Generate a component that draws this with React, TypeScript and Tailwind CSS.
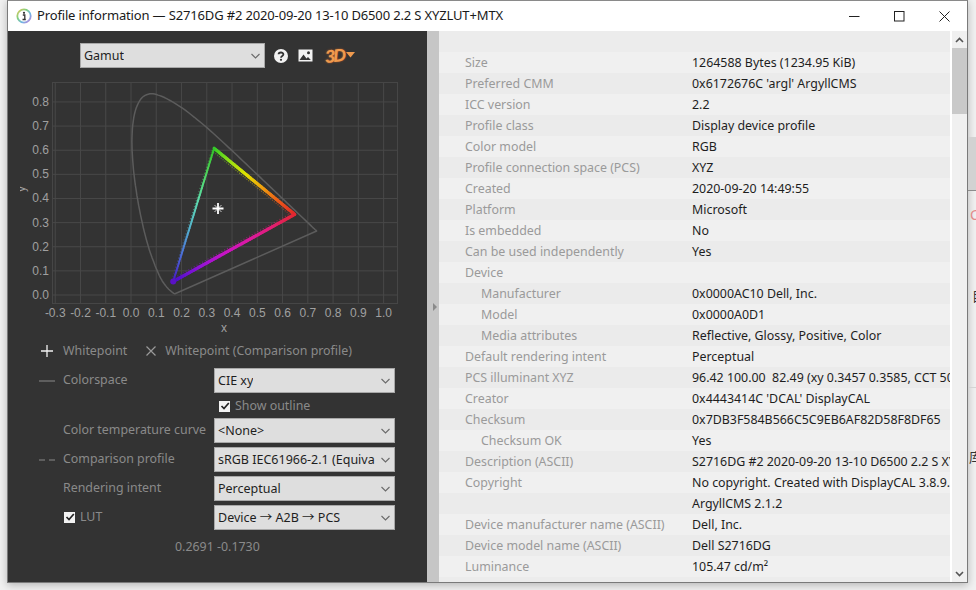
import React from "react";

const FONT = '"Noto Sans", "Noto Sans CJK SC", sans-serif';

const rawLocus: [number, number][] = [
  [0.1741, 0.005], [0.1689, 0.0069], [0.156, 0.0177], [0.144, 0.0297], [0.1241, 0.0578],
  [0.1096, 0.0868], [0.0913, 0.1327], [0.0687, 0.2007], [0.0454, 0.295], [0.0235, 0.4127],
  [0.0082, 0.5384], [0.0039, 0.6548], [0.0139, 0.7502], [0.0389, 0.812], [0.0743, 0.8338],
  [0.1142, 0.8262], [0.1547, 0.8059], [0.1929, 0.7816], [0.2296, 0.7543], [0.3016, 0.6923],
  [0.3731, 0.6245], [0.4441, 0.5547], [0.5125, 0.4866], [0.5752, 0.4242], [0.627, 0.3725],
  [0.6915, 0.3083], [0.719, 0.2809], [0.7347, 0.2653],
];

// Catmull-Rom resampling, so the spectral locus is a smooth curve
const locus: [number, number][] = [];
rawLocus.forEach((p1, i) => {
  if (i === rawLocus.length - 1) {
    locus.push(p1);
    return;
  }
  const p0 = rawLocus[Math.max(i - 1, 0)];
  const p2 = rawLocus[i + 1];
  const p3 = rawLocus[Math.min(i + 2, rawLocus.length - 1)];
  for (let s = 0; s < 6; s++) {
    const t = s / 6;
    const f = (a: number, b: number, c: number, d: number) =>
      0.5 * (2 * b + (c - a) * t + (2 * a - 5 * b + 4 * c - d) * t * t + (3 * b - a - 3 * c + d) * t * t * t);
    locus.push([f(p0[0], p1[0], p2[0], p3[0]), f(p0[1], p1[1], p2[1], p3[1])]);
  }
});

// The svg starts at page (20, 80)
const px = (x: number) => 131 - 20 + x * 252.6;
const py = (y: number) => 295 - 80 - y * 241.3;

type Stop = [number, number, number];
const mix = (stops: Stop[], t: number) => {
  const f = Math.min(t * (stops.length - 1), stops.length - 1.0001);
  const i = Math.floor(f);
  const k = f - i;
  const c = stops[i].map((v, n) => Math.round(v + (stops[i + 1][n] - v) * k));
  return `rgb(${c[0]},${c[1]},${c[2]})`;
};

const R: [number, number] = [0.648, 0.334];
const G: [number, number] = [0.329, 0.608];
const B: [number, number] = [0.167, 0.056];

const edges: { a: [number, number]; b: [number, number]; w: number; stops: Stop[]; off: [number, number] }[] = [
  {
    a: G, b: R, w: 3.2, off: [-2, 2.4],
    stops: [[50, 205, 40], [150, 225, 20], [225, 225, 0], [240, 160, 15], [235, 90, 25], [225, 40, 40]],
  },
  {
    a: R, b: B, w: 3.2, off: [-1, -2.6],
    stops: [[225, 40, 50], [225, 30, 120], [218, 25, 165], [195, 20, 200], [140, 20, 215], [70, 15, 200]],
  },
  {
    a: B, b: G, w: 1.9, off: [-2, 0.8],
    stops: [[70, 25, 195], [75, 110, 215], [85, 180, 205], [95, 220, 175], [80, 215, 95], [50, 195, 40]],
  },
];

const Chart = () => {
  const xt = [-0.3, -0.2, -0.1, 0, 0.1, 0.2, 0.3, 0.4, 0.5, 0.6, 0.7, 0.8, 0.9, 1.0];
  const yt = [0, 0.1, 0.2, 0.3, 0.4, 0.5, 0.6, 0.7, 0.8];
  const d = locus.map((p, i) => `${i ? "L" : "M"}${px(p[0]).toFixed(1)} ${py(p[1]).toFixed(1)}`).join(" ") + " Z";
  return (
    <svg width="390" height="262" className="block" style={{ fontFamily: '"Liberation Sans", sans-serif' }}>
      <rect x="32.5" y="2.5" width="345" height="221" fill="none" stroke="#464646" />
      {xt.map((x) => (
        <line key={x} x1={px(x)} x2={px(x)} y1="3" y2="223" stroke="#484848" />
      ))}
      {yt.map((y) => (
        <line key={y} y1={py(y)} y2={py(y)} x1="33" x2="377" stroke="#484848" />
      ))}
      {xt.map((x) => (
        <text key={x} x={px(x)} y="237" textAnchor="middle" fontSize="12" fill="#a0a0a0">
          {x.toFixed(1)}
        </text>
      ))}
      {yt.map((y) => (
        <text key={y} x="31" y={py(y) + 4} textAnchor="end" fontSize="12" fill="#a0a0a0" dx="-2">
          {y.toFixed(1)}
        </text>
      ))}
      <text x="204" y="252" textAnchor="middle" fontSize="12" fill="#a0a0a0">x</text>
      <text x="9" y="113" textAnchor="middle" fontSize="12" fill="#a0a0a0" transform="rotate(-90 5 113)">y</text>
      <path d={d} fill="none" stroke="#5c5c5c" strokeWidth="1.5" strokeLinejoin="round" />
      <g style={{ filter: "blur(0.4px)" }}>
        {edges.map((e, n) =>
          Array.from({ length: 44 }, (_, i) => {
            const t = i / 44;
            const ax = px(e.a[0] + (e.b[0] - e.a[0]) * t);
            const ay = py(e.a[1] + (e.b[1] - e.a[1]) * t);
            return (
              <rect key={`d${n}-${i}`} x={ax + e.off[0] - 0.6} y={ay + e.off[1] - 0.6} width="1.2" height="1.2"
                fill={mix(e.stops, t)} opacity="0.5" />
            );
          })
        )}
        {edges.map((e, n) =>
          Array.from({ length: 60 }, (_, i) => {
            const t0 = i / 60;
            const t1 = (i + 1) / 60;
            return (
              <line key={`${n}-${i}`}
                x1={px(e.a[0] + (e.b[0] - e.a[0]) * t0)} y1={py(e.a[1] + (e.b[1] - e.a[1]) * t0)}
                x2={px(e.a[0] + (e.b[0] - e.a[0]) * t1)} y2={py(e.a[1] + (e.b[1] - e.a[1]) * t1)}
                stroke={mix(e.stops, t0)} strokeWidth={e.w} strokeLinecap="round" />
            );
          })
        )}
        <circle cx={px(B[0])} cy={py(B[1])} r="3" fill="#5a12c4" />
      </g>
      <g stroke="#ffffff">
        <path d="M198 123V134M192.500 128.500H203.500" strokeWidth="1.800" />
        <path d="M194.500 125L201.500 132M201.500 125L194.500 132" strokeWidth="1" opacity="0.75" />
      </g>
    </svg>
  );
};

const Chevron = () => (
  <svg width="9" height="6" viewBox="0 0 9 6" className="shrink-0">
    <path d="M0.500 1L4.500 5L8.500 1" fill="none" stroke="#6a6a6a" strokeWidth="1.100" />
  </svg>
);

const Select = ({ children, w = "w-[181px]" }: { children: React.ReactNode; w?: string }) => (
  <div className={`${w} h-[25px] shrink-0 flex items-center justify-between bg-[#dedede] border border-[#a8a8a8] pl-[3px] pr-[4px] text-[12.5px] text-[#1e1e1e] overflow-hidden whitespace-nowrap`}>
    <span className="overflow-hidden pt-[1px]">{children}</span>
    <Chevron />
  </div>
);

const Check = () => (
  <span className="w-[11px] h-[11px] bg-[#f2f2f2] flex items-center justify-center shrink-0">
    <svg width="10" height="10" viewBox="0 0 10 10">
      <path d="M1.500 5L4 7.500L8.800 2" fill="none" stroke="#222" strokeWidth="1.700" />
    </svg>
  </span>
);

const Row = ({ mark, label, children, className = "" }: { mark?: React.ReactNode; label: React.ReactNode; children: React.ReactNode; className?: string }) => (
  <div className={`flex items-center h-[25px] ${className}`}>
    <div className="w-[25px] shrink-0 flex justify-start pl-[1px]">{mark}</div>
    <div className="w-[151px] shrink-0 text-[12.4px] text-[#8a8a8a] whitespace-nowrap">{label}</div>
    {children}
  </div>
);

const rows: [string, string, boolean?][] = [
  ["Size", "1264588 Bytes (1234.95 KiB)"],
  ["Preferred CMM", "0x6172676C 'argl' ArgyllCMS"],
  ["ICC version", "2.2"],
  ["Profile class", "Display device profile"],
  ["Color model", "RGB"],
  ["Profile connection space (PCS)", "XYZ"],
  ["Created", "2020-09-20 14:49:55"],
  ["Platform", "Microsoft"],
  ["Is embedded", "No"],
  ["Can be used independently", "Yes"],
  ["Device", ""],
  ["Manufacturer", "0x0000AC10 Dell, Inc.", true],
  ["Model", "0x0000A0D1", true],
  ["Media attributes", "Reflective, Glossy, Positive, Color", true],
  ["Default rendering intent", "Perceptual"],
  ["PCS illuminant XYZ", "96.42 100.00  82.49 (xy 0.3457 0.3585, CCT 5000K)"],
  ["Creator", "0x4443414C 'DCAL' DisplayCAL"],
  ["Checksum", "0x7DB3F584B566C5C9EB6AF82D58F8DF65"],
  ["Checksum OK", "Yes", true],
  ["Description (ASCII)", "S2716DG #2 2020-09-20 13-10 D6500 2.2 S XYZLUT+MTX"],
  ["Copyright", "No copyright. Created with DisplayCAL 3.8.9.3 and"],
  ["", "ArgyllCMS 2.1.2"],
  ["Device manufacturer name (ASCII)", "Dell, Inc."],
  ["Device model name (ASCII)", "Dell S2716DG"],
  ["Luminance", "105.47 cd/m²"],
];

const Dash = ({ w }: { w: string }) => <span className={`block ${w} h-[2px] bg-[#5e5e5e]`} />;

export default function App() {
  return (
    <div className="relative w-[976px] h-[590px] overflow-hidden bg-[#f1f1f1]" style={{ fontFamily: FONT }}>
      {/* Desktop behind the window, right edge */}
      <div className="absolute left-[968px] top-[137px] w-[8px] h-[54px] bg-[#d2d2d2] border-b border-[#8c8c8c]" />
      <div className="absolute left-[970px] top-[208px] text-[14px] leading-none text-[#e38a8a]">C</div>
      <div className="absolute left-[972px] top-[290px] text-[13px] leading-none text-[#333]">目</div>
      <div className="absolute left-[969px] top-[451px] text-[13px] leading-none text-[#333]">库</div>
      <div className="absolute left-[968px] top-[387px] w-[8px] h-px bg-[#d4d4d4]" />

      <div className="ml-[7px] w-[961px] h-[583px] flex flex-col border border-[#7a7a7a] border-t-[#8a8a8a] bg-white shadow-[0_2px_8px_rgba(0,0,0,0.25)]">
        {/* Title bar */}
        <div className="h-[30px] shrink-0 flex items-center bg-white">
          <svg width="16" height="16" viewBox="0 0 16 16" className="ml-[8px] mr-[5px] shrink-0">
            <defs>
              <linearGradient id="ring" x1="0" y1="0" x2="1" y2="1">
                <stop offset="0" stopColor="#e7c85a" />
                <stop offset="0.35" stopColor="#7fcf7f" />
                <stop offset="0.65" stopColor="#71b7e5" />
                <stop offset="1" stopColor="#c77ad6" />
              </linearGradient>
            </defs>
            <circle cx="8" cy="8" r="6.700" fill="#fff" stroke="url(#ring)" strokeWidth="1.800" />
            <circle cx="8" cy="4.800" r="1.100" fill="#333" />
            <path d="M6.800 7H8.800V11.500H9.800M6.500 11.500H9" fill="none" stroke="#333" strokeWidth="1.300" />
          </svg>
          <span className="text-[13px] tracking-[-0.15px] text-[#1a1a1a] whitespace-nowrap">
            Profile information — S2716DG #2 2020-09-20 13-10 D6500 2.2 S XYZLUT+MTX
          </span>
          <div className="ml-auto flex items-center h-full">
            <div className="w-[45px] flex justify-center">
              <svg width="11" height="11" viewBox="0 0 11 11"><path d="M0 5.500H10.500" stroke="#222" strokeWidth="1" /></svg>
            </div>
            <div className="w-[45px] flex justify-center">
              <svg width="11" height="11" viewBox="0 0 11 11"><rect x="0.500" y="0.500" width="9.500" height="9.500" fill="none" stroke="#222" /></svg>
            </div>
            <div className="w-[45px] flex justify-center">
              <svg width="11" height="11" viewBox="0 0 11 11"><path d="M0.500 0.500L10.500 10.500M10.500 0.500L0.500 10.500" stroke="#222" strokeWidth="1" /></svg>
            </div>
          </div>
        </div>

        <div className="flex-1 flex min-h-0">
          {/* Left panel */}
          <div className="w-[419px] shrink-0 bg-[#333333] flex flex-col">
            <div className="flex items-center mt-[12px] pl-[72px] h-[25px]">
              <Select w="w-[185px]">Gamut</Select>
              <svg width="16" height="16" viewBox="0 0 16 16" className="ml-[8px]">
                <circle cx="8" cy="8" r="7" fill="#f2f2f2" />
                <path d="M5.600 6.300C5.600 3.900 10.400 3.900 10.400 6.300C10.400 8 8 7.800 8 9.700" fill="none" stroke="#333" strokeWidth="1.800" />
                <circle cx="8" cy="11.800" r="1.100" fill="#333" />
              </svg>
              <svg width="15" height="13" viewBox="0 0 15 13" className="ml-[9px]">
                <rect x="0.500" y="0.500" width="14" height="12" fill="#f2f2f2" />
                <circle cx="10.500" cy="3.700" r="1.500" fill="#333" />
                <path d="M1.500 11L5.500 5.500L8.500 9.500L10 8L12.800 11Z" fill="#333" />
              </svg>
              <span
                className="ml-[12px] w-[18px] text-[18px] font-bold italic text-[#ef9a4e] leading-none tracking-[-2px] [text-shadow:0_0_2px_#b8602a] -rotate-6"
                style={{ fontFamily: '"Liberation Sans", sans-serif' }}
              >
                3D
              </span>
              <svg width="9" height="6" viewBox="0 0 9 6" className="ml-[3px] -translate-y-[1px]">
                <path d="M0 0H9L4.500 5.500Z" fill="#ef9a4e" />
              </svg>
            </div>

            <div className="ml-[12px] mt-[12px]">
              <Chart />
            </div>

            <div className="flex items-center h-[20px] mt-[-1px] text-[12.4px] text-[#8a8a8a] whitespace-nowrap">
              <div className="w-[24px] ml-[27px] mr-[4px] flex justify-center">
                <svg width="12" height="12" viewBox="0 0 12 12"><path d="M6 0V12M0 6H12" stroke="#f2f2f2" strokeWidth="1.300" /></svg>
              </div>
              <span>Whitepoint</span>
              <svg width="10" height="10" viewBox="0 0 10 10" className="ml-[19px]"><path d="M0.500 0.500L9.500 9.500M9.500 0.500L0.500 9.500" stroke="#9a9a9a" strokeWidth="1.200" /></svg>
              <span className="ml-[9px]">Whitepoint (Comparison profile)</span>
            </div>

            <div className="pl-[30px] mt-[7px] flex flex-col">
              <Row mark={<Dash w="w-[16px]" />} label="Colorspace"><Select>CIE xy</Select></Row>
              <div className="flex items-center h-[25px] pl-[181px] pt-[1px] gap-[5px] text-[12.4px] text-[#8a8a8a]">
                <Check /> Show outline
              </div>
              <Row label="Color temperature curve"><Select>&lt;None&gt;</Select></Row>
              <Row className="mt-[4px]" mark={
                <span className="flex gap-[4px]"><Dash w="w-[6px]" /><Dash w="w-[6px]" /></span>
              } label="Comparison profile"><Select>sRGB IEC61966-2.1 (Equiva</Select></Row>
              <Row className="mt-[4px]" label="Rendering intent"><Select>Perceptual</Select></Row>
              <Row className="mt-[4px]" label={<span className="flex items-center gap-[5px] ml-[1px]"><Check /> LUT</span>}>
                <Select>Device → A2B → PCS</Select>
              </Row>
            </div>

            <div className="mt-[8px] pl-[167px] text-[12.4px] leading-[18px] text-[#8a8a8a] whitespace-nowrap">
              0.2691 -0.1730
            </div>
          </div>

          {/* Splitter */}
          <div className="w-[12px] shrink-0 bg-[#c6c6c6] flex items-center justify-center">
            <span className="block w-0 h-0 border-y-[4px] border-y-transparent border-l-[4px] border-l-[#8a8a8a] translate-x-[2px]" />
          </div>

          {/* Table */}
          <div className="w-[511px] shrink-0 overflow-hidden bg-[#ececec]">
            <div className="h-[21px]" />
            {rows.map(([k, v, indent], i) => (
              <div key={i} className={`h-[21px] pt-[2px] flex items-center whitespace-pre text-[12.4px] ${i % 2 ? "bg-[#ebebeb]" : "bg-[#f0f0f0]"}`}>
                <div className={`w-[253px] shrink-0 text-[#9a9a9a] ${indent ? "pl-[42px]" : "pl-[26px]"}`}>{k}</div>
                <div className="text-[#1e1e1e]">{v}</div>
              </div>
            ))}
          </div>

          {/* Scrollbar */}
          <div className="w-[2px] shrink-0 bg-white" />
          <div className="flex-1 bg-[#f0f0f0] flex flex-col">
            <div className="h-[17px] flex items-center justify-center bg-[#f0f0f0]">
              <svg width="9" height="6" viewBox="0 0 9 6"><path d="M1 5L4.500 1.500L8 5" fill="none" stroke="#555" strokeWidth="1.600" /></svg>
            </div>
            <div className="h-[66px] bg-[#c9c9c9]" />
            <div className="mt-auto h-[17px] flex items-center justify-center">
              <svg width="9" height="6" viewBox="0 0 9 6"><path d="M1 1L4.500 4.500L8 1" fill="none" stroke="#555" strokeWidth="1.600" /></svg>
            </div>
          </div>
        </div>
      </div>
    </div>
  );
}
